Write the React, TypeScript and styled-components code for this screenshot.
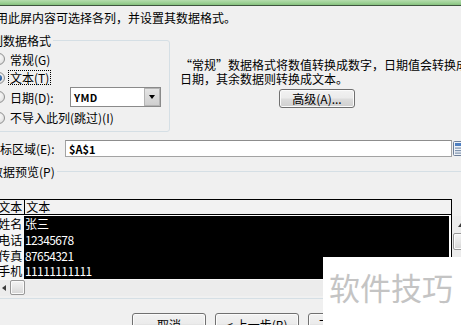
import React from 'react';
import styled, { createGlobalStyle } from 'styled-components';

const GlobalStyle = createGlobalStyle`
  html, body {
    margin: 0;
    padding: 0;
    background: #f0f0f0;
  }
`;

const Screen = styled.div`
  position: relative;
  width: 461px;
  height: 325px;
  overflow: hidden;
  background: #f0f0f0;
  font-family: "Noto Sans CJK SC", "Liberation Sans", sans-serif;
  font-size: 12px;
  color: #000;
`;

const TitleStrip = styled.div`
  height: 5px;
  background: linear-gradient(to bottom, #b6ddae 0%, #9bd093 60%, #86c07e 100%);
  border-bottom: 1px solid #3f553f;
`;

/* the dialog is wider than the shot, its left edge is cropped */
const Dialog = styled.div`
  width: 520px;
  margin-left: -24px;
`;

const Intro = styled.div`
  margin: 5px 0 0 20px;
  line-height: 14px;
  white-space: nowrap;
`;

const FormatSection = styled.div`
  display: flex;
  align-items: flex-start;
  margin-top: 9px;
`;

const GroupBox = styled.fieldset<{ $width: number }>`
  width: ${({ $width }) => $width}px;
  box-sizing: border-box;
  margin: 0 0 0 4px;
  padding: 0;
  min-width: 0;
  border: 1px solid #d5dfe5;
  border-radius: 3px;
`;

const Legend = styled.legend`
  margin-left: 8px;
  padding: 0 2px;
  line-height: 13px;
  white-space: nowrap;
`;

const GroupBody = styled.div<{ $pad: string }>`
  padding: ${({ $pad }) => $pad};
`;

const OptionRow = styled.div<{ $h: number }>`
  display: flex;
  align-items: center;
  height: ${({ $h }) => $h}px;
  white-space: nowrap;
`;

const Radio = styled.span<{ $on?: boolean }>`
  flex: none;
  width: 12px;
  height: 12px;
  box-sizing: border-box;
  margin-right: 3px;
  border: 1px solid #8e8f8f;
  border-radius: 50%;
  background: radial-gradient(circle at 40% 35%, #ffffff 0%, #e8e8e8 60%, #d2d2d2 100%);
  display: flex;
  align-items: center;
  justify-content: center;
  &::after {
    content: '';
    width: 6px;
    height: 6px;
    border-radius: 50%;
    background: ${({ $on }) =>
      $on ? 'radial-gradient(circle at 35% 35%, #7fb2e8 0%, #1b4f93 70%, #0d2f5e 100%)' : 'transparent'};
  }
`;

const OptionLabel = styled.span<{ $focus?: boolean; $w?: number }>`
  padding: 0 1px;
  line-height: 13px;
  border: 1px dotted ${({ $focus }) => ($focus ? '#000' : 'transparent')};
  width: ${({ $w }) => ($w ? `${$w}px` : 'auto')};
  box-sizing: border-box;
`;

const Combo = styled.div`
  width: 91px;
  height: 20px;
  box-sizing: border-box;
  border: 1px solid #8a8a8a;
  background: #fff;
  display: flex;
`;

const ComboText = styled.span`
  flex: 1;
  padding-left: 3px;
  display: flex;
  align-items: center;
  font-size: 10.5px;
  font-weight: 700;
  letter-spacing: 0.3px;
`;

const ComboButton = styled.span`
  width: 16px;
  box-sizing: border-box;
  border: 1px solid #b4b4b4;
  background: linear-gradient(to bottom, #e4e4e4 0%, #cfcfcf 100%);
  display: flex;
  align-items: center;
  justify-content: center;
  &::after {
    content: '';
    border-left: 3.5px solid transparent;
    border-right: 3.5px solid transparent;
    border-top: 4px solid #000;
  }
`;

const Explain = styled.div`
  margin: 24px 0 0 10px;
  line-height: 14px;
  white-space: nowrap;
`;

const PushButton = styled.button<{ $w: number; $h: number }>`
  width: ${({ $w }) => $w}px;
  height: ${({ $h }) => $h}px;
  box-sizing: border-box;
  padding: 0;
  border: 1px solid #707070;
  border-radius: 3px;
  background: linear-gradient(to bottom, #f2f2f2 0%, #ebebeb 48%, #dddddd 52%, #cfcfcf 100%);
  box-shadow: inset 0 0 0 1px #fbfbfb;
  font: inherit;
  color: #000;
  display: flex;
  align-items: center;
  justify-content: center;
  white-space: nowrap;
  flex: none;
`;

const AdvancedButton = styled(PushButton)`
  margin: 3px 0 0 109px;
`;

const TargetRow = styled.div`
  display: flex;
  align-items: center;
  height: 17px;
  margin-top: 8px;
`;

const FieldLabel = styled.span<{ $w: number }>`
  width: ${({ $w }) => $w}px;
  margin-left: 12px;
  white-space: nowrap;
  flex: none;
`;

const TextBox = styled.div`
  width: 387px;
  height: 17px;
  box-sizing: border-box;
  border: 1px solid #a3a3a3;
  border-top-color: #8d8d8d;
  background: #fff;
  padding-left: 3px;
  display: flex;
  align-items: center;
  font-size: 11px;
  font-weight: 700;
  flex: none;
`;

const CollapseIcon = styled.svg`
  flex: none;
  margin-left: 1px;
`;

const PreviewGroup = styled(GroupBox)`
  margin-top: 8px;
`;

const PreviewRow = styled.div`
  display: flex;
  align-items: flex-start;
`;

const Grid = styled.div`
  width: 456px;
  box-sizing: border-box;
  border: 1px solid #000;
  border-bottom: none;
  background: #fff;
`;

const HeadRow = styled.div`
  display: flex;
  height: 14px;
  border-bottom: 1px solid #000;
  margin-bottom: 1px;
  background: #f2f2f2;
`;

const HeadCell = styled.div<{ $w?: number; $pad: number }>`
  width: ${({ $w }) => ($w ? `${$w}px` : 'auto')};
  flex: ${({ $w }) => ($w ? 'none' : '1')};
  padding-left: ${({ $pad }) => $pad}px;
  line-height: 14px;
  white-space: nowrap;
  border-right: ${({ $w }) => ($w ? '1px solid #000' : 'none')};
`;

const DataRow = styled.div`
  display: flex;
  height: 15.75px;
`;

const NameCell = styled.div`
  width: 27px;
  flex: none;
  padding-left: 1.2px;
  box-sizing: border-box;
  line-height: 15.75px;
  background: #f6f6f6;
  white-space: nowrap;
`;

const ValueCell = styled.div<{ $digits?: boolean }>`
  flex: 1;
  margin-right: 2px;
  padding-left: 1px;
  background: #000;
  color: #fff;
  line-height: 15.75px;
  white-space: nowrap;
  letter-spacing: ${({ $digits }) => ($digits ? '-0.6px' : '0')};
`;

const HScroll = styled.div`
  display: flex;
  height: 17px;
  background: #ececec;
  border-top: 1px solid #f8f8f8;
  box-sizing: border-box;
`;

const ArrowButton = styled.div<{ $dir: 'left' | 'up' }>`
  flex: none;
  width: ${({ $dir }) => ($dir === 'left' ? '13px' : '17px')};
  height: ${({ $dir }) => ($dir === 'left' ? '16px' : '17px')};
  display: flex;
  align-items: center;
  justify-content: center;
  &::after {
    content: '';
    ${({ $dir }) =>
      $dir === 'left'
        ? 'border-top: 3.5px solid transparent; border-bottom: 3.5px solid transparent; border-right: 4px solid #3c3c3c;'
        : 'border-left: 3.5px solid transparent; border-right: 3.5px solid transparent; border-bottom: 4px solid #3c3c3c;'}
  }
`;

const Thumb = styled.div<{ $w: number; $h: number }>`
  flex: none;
  width: ${({ $w }) => $w}px;
  height: ${({ $h }) => $h}px;
  box-sizing: border-box;
  border: 1px solid #979797;
  border-radius: 2px;
  background: linear-gradient(to bottom, #f4f4f4 0%, #e6e6e6 50%, #d6d6d6 100%);
  box-shadow: inset 0 0 0 1px #fafafa;
`;

const VScroll = styled.div`
  width: 17px;
  height: 80px;
  margin-top: 17px;
  display: flex;
  flex-direction: column;
  align-items: center;
  background: #ececec;
`;

const ButtonBar = styled.div`
  display: flex;
  gap: 9px;
  margin: 14px 0 0 156px;
`;

const Watermark = styled.div`
  position: absolute;
  left: 323px;
  top: 257px;
  width: 138px;
  height: 68px;
  box-sizing: border-box;
  padding: 14px 0 0 6px;
  background: #fff;
  color: #c4c4c4;
  font-size: 31px;
  line-height: 31px;
  white-space: nowrap;
`;

const rows = [
  { name: '姓名', value: '张三', digits: false },
  { name: '电话', value: '12345678', digits: true },
  { name: '传真', value: '87654321', digits: true },
  { name: '手机', value: '11111111111', digits: true },
];

const App = () => {
  return (
    <Screen>
      <GlobalStyle />
      <TitleStrip />
      <Dialog>
        <Intro>用此屏内容可选择各列，并设置其数据格式。</Intro>

        <FormatSection>
          <GroupBox $width={190}>
            <Legend>列数据格式</Legend>
            <GroupBody $pad="3px 0 3px 12px">
              <OptionRow $h={18}>
                <Radio />
                <OptionLabel>常规(G)</OptionLabel>
              </OptionRow>
              <OptionRow $h={19}>
                <Radio $on />
                <OptionLabel $focus>文本(T)</OptionLabel>
              </OptionRow>
              <OptionRow $h={20}>
                <Radio />
                <OptionLabel $w={62}>日期(D):</OptionLabel>
                <Combo>
                  <ComboText>YMD</ComboText>
                  <ComboButton />
                </Combo>
              </OptionRow>
              <OptionRow $h={21}>
                <Radio />
                <OptionLabel>不导入此列(跳过)(I)</OptionLabel>
              </OptionRow>
            </GroupBody>
          </GroupBox>

          <div>
            <Explain>
              “常规”数据格式将数值转换成数字，日期值会转换成
              <br />
              日期，其余数据则转换成文本。
            </Explain>
            <AdvancedButton $w={76} $h={19}>高级(A)...</AdvancedButton>
          </div>
        </FormatSection>

        <TargetRow>
          <FieldLabel $w={77}>目标区域(E):</FieldLabel>
          <TextBox>$A$1</TextBox>
          <CollapseIcon width="16" height="16" viewBox="0 0 16 16">
            <rect x="0.5" y="0.5" width="13" height="14" rx="1" fill="#eef2f8" stroke="#6d7f99" />
            <rect x="2" y="2" width="10" height="3" fill="#4f7fc0" />
            <rect x="2" y="6.5" width="10" height="1.2" fill="#7f93ad" />
            <rect x="2" y="9" width="10" height="1.2" fill="#7f93ad" />
            <rect x="2" y="11.5" width="6" height="1.2" fill="#7f93ad" />
          </CollapseIcon>
        </TargetRow>

        <PreviewGroup $width={520}>
          <Legend>数据预览(P)</Legend>
          <GroupBody $pad="21px 0 2px 15px">
            <PreviewRow>
              <Grid>
                <HeadRow>
                  <HeadCell $w={26} $pad={1.2}>文本</HeadCell>
                  <HeadCell $pad={1}>文本</HeadCell>
                </HeadRow>
                {rows.map((r) => (
                  <DataRow key={r.name}>
                    <NameCell>{r.name}</NameCell>
                    <ValueCell $digits={r.digits}>{r.value}</ValueCell>
                  </DataRow>
                ))}
                <HScroll>
                  <ArrowButton $dir="left" />
                  <Thumb $w={15} $h={15} />
                </HScroll>
              </Grid>
              <VScroll>
                <ArrowButton $dir="up" />
                <Thumb $w={15} $h={17} />
              </VScroll>
            </PreviewRow>
          </GroupBody>
        </PreviewGroup>

        <ButtonBar>
          <PushButton $w={74} $h={23}>取消</PushButton>
          <PushButton $w={84} $h={23}>&lt; 上一步(B)</PushButton>
          <PushButton $w={84} $h={23}>下一步(N) &gt;</PushButton>
        </ButtonBar>
      </Dialog>

      <Watermark>软件技巧</Watermark>
    </Screen>
  );
};

export default App;
